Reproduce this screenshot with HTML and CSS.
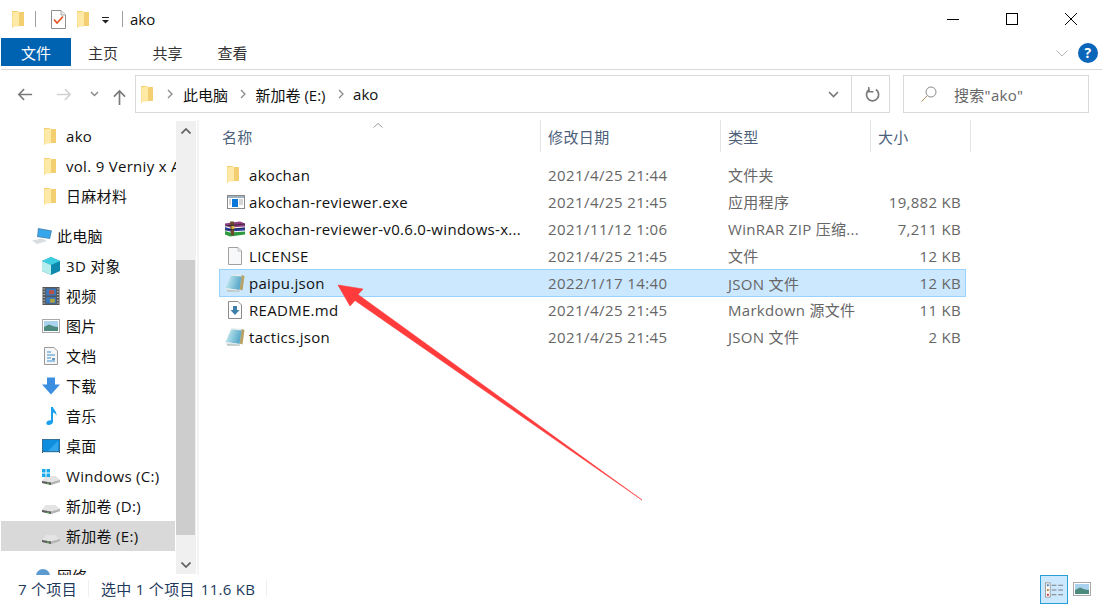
FILE: index.html
```html
<!DOCTYPE html>
<html lang="zh">
<head>
<meta charset="utf-8">
<title>ako</title>
<link rel="stylesheet" href="styles.css">
</head>
<body>
<svg class="defs" aria-hidden="true">
  <defs>
    <linearGradient id="jsonblue" x1="0" y1="0" x2="1" y2="0.3">
      <stop offset="0" stop-color="#dcf2f5"/>
      <stop offset="0.55" stop-color="#8fcbde"/>
      <stop offset="1" stop-color="#5aa8ca"/>
    </linearGradient>
    <symbol id="folder" viewBox="0 0 12 17">
      <path d="M0 0H5.500L6.500 1H12V15H2.500L0 17Z" fill="#f4cf72"/>
      <path d="M0 1.500L7 .5V15.500H2.600L0 17Z" fill="#ffe9a6"/>
      <path d="M0 1V17L1 16.400V1Z" fill="#fbdf92"/>
    </symbol>
    <symbol id="json" viewBox="0 0 20 18">
      <path d="M6 0L18 1L16 15L12 15Z" fill="#e6ecec"/>
      <path d="M16.500 1L19.500 2L17.500 16.500L14.500 15.500Z" fill="#b7a368"/>
      <path d="M6 1.500L16.500 2.500L14.500 16L.5 14Z" fill="url(#jsonblue)"/>
      <path d="M.5 14L14.500 16L15 17.500L2.500 17.500Z" fill="#e2e9e9"/>
      <path d="M2.500 17.500H15L14.800 16.700L1.600 16.200Z" fill="#a9b4b4"/>
    </symbol>
    <symbol id="drive" viewBox="0 0 18 10">
      <path d="M4 1H13L18 5V7L9 10L0 8V6Z" fill="#d4d4d4"/>
      <path d="M4 1H13L18 5L9 7.500L0 6Z" fill="#e4e4e4"/>
      <path d="M9 7.500L18 5V7L9 10Z" fill="#b4b4b4"/>
      <path d="M0 6L9 7.500V10L0 8Z" fill="#5c5c5c"/>
      <rect x="5" y="7.600" width="2" height="1.200" fill="#58c35a"/>
    </symbol>
  </defs>
</svg>

<div class="window">
  <header class="titlebar">
    <div class="qat">
      <svg class="ic-folder"><use href="#folder"/></svg>
      <span class="qat-sep first"></span>
      <svg class="ic-check" viewBox="0 0 15 19">
        <path d="M.5.5H10L14.500 5V18.500H.5Z" fill="#fff" stroke="#8f8f8f"/>
        <path d="M10 .5V5H14.500" fill="#eee" stroke="#aaa"/>
        <path d="M3 9.500L6 13L12 6.500" fill="none" stroke="#e2511f" stroke-width="1.600"/>
      </svg>
      <svg class="ic-folder"><use href="#folder"/></svg>
      <svg class="ic-drop" viewBox="0 0 8 7">
        <rect width="7" height="1" fill="#222"/>
        <path d="M0 3H7L3.500 6.500Z" fill="#222"/>
      </svg>
      <span class="qat-sep"></span>
      <span class="title-text">ako</span>
    </div>
    <div class="win-btns">
      <svg class="win-btn" viewBox="0 0 58 38"><path d="M23 19.500H35" stroke="#000" fill="none"/></svg>
      <svg class="win-btn" viewBox="0 0 58 38"><rect x="23.500" y="13.500" width="11" height="11" stroke="#000" fill="none"/></svg>
      <svg class="win-btn" viewBox="0 0 58 38"><path d="M23 13L35 25M35 13L23 25" stroke="#000" fill="none"/></svg>
    </div>
  </header>

  <nav class="ribbon">
    <span class="tab active">文件</span>
    <span class="tab">主页</span>
    <span class="tab">共享</span>
    <span class="tab">查看</span>
    <span class="spacer"></span>
    <svg class="ribbon-chev" viewBox="0 0 12 7"><path d="M.5.5L6 6L11.500.5" fill="none" stroke="#b5b5b5"/></svg>
    <span class="help">?</span>
  </nav>

  <div class="navrow">
    <div class="nav-btns">
      <svg class="nav-ic" viewBox="0 0 18 14"><path d="M17 7H2M8 1L2 7L8 13" fill="none" stroke="#7a7a7a" stroke-width="1.800"/></svg>
      <svg class="nav-ic light" viewBox="0 0 18 14"><path d="M1 7H16M10 1L16 7L10 13" fill="none" stroke="#d2d2d2" stroke-width="1.800"/></svg>
      <svg class="nav-small" viewBox="0 0 9 6"><path d="M1 1L4.500 4.500L8 1" fill="none" stroke="#8a8a8a" stroke-width="1.500"/></svg>
      <svg class="nav-up" viewBox="0 0 14 17"><path d="M7 17V2M1 8L7 2L13 8" fill="none" stroke="#7a7a7a" stroke-width="1.800"/></svg>
    </div>
    <div class="address">
      <svg class="ic-folder"><use href="#folder"/></svg>
      <svg class="crumb-chev first" viewBox="0 0 6 10"><path d="M1 1L5 5L1 9" fill="none" stroke="#8a8a8a" stroke-width="1.300"/></svg>
      <span class="crumb">此电脑</span>
      <svg class="crumb-chev" viewBox="0 0 6 10"><path d="M1 1L5 5L1 9" fill="none" stroke="#8a8a8a" stroke-width="1.300"/></svg>
      <span class="crumb">新加卷 (E:)</span>
      <svg class="crumb-chev" viewBox="0 0 6 10"><path d="M1 1L5 5L1 9" fill="none" stroke="#8a8a8a" stroke-width="1.300"/></svg>
      <span class="crumb">ako</span>
      <span class="spacer"></span>
      <svg class="addr-drop" viewBox="0 0 11 7"><path d="M1 1L5.500 5.500L10 1" fill="none" stroke="#777" stroke-width="1.600"/></svg>
      <span class="refresh">
        <svg class="refresh-ic" viewBox="0 0 16 16"><path d="M5 2.500A6.500 6.500 0 1 0 11.500 2.700" fill="none" stroke="#7a7a7a" stroke-width="1.800"/><path d="M4 0V5H9" fill="none" stroke="#7a7a7a" stroke-width="1.500"/></svg>
      </span>
    </div>
    <div class="search">
      <svg class="search-ic" viewBox="0 0 16 16"><circle cx="10" cy="6" r="5" fill="none" stroke="#8a8a8a"/><path d="M6.500 9.500L.5 15.500" stroke="#b08a5a" fill="none"/></svg>
      <span>搜索"ako"</span>
    </div>
  </div>

  <main class="body">
    <aside class="sidebar">
      <div class="tree">
        <div class="tree-row"><svg class="tree-ic ic-folder"><use href="#folder"/></svg><span class="tree-label">ako</span></div>
        <div class="tree-row"><svg class="tree-ic ic-folder"><use href="#folder"/></svg><span class="tree-label">vol. 9 Verniy x Akatsuki</span></div>
        <div class="tree-row"><svg class="tree-ic ic-folder"><use href="#folder"/></svg><span class="tree-label">日麻材料</span></div>
        <div class="tree-row top-level section">
          <svg class="pc-ic" viewBox="0 0 20 16">
            <path d="M6 0L20 2.500L18 11L5 9Z" fill="#4c90c4"/>
            <path d="M7 1.500L18.500 3.500L17 9.800L6.300 8Z" fill="#35a7ea"/>
            <path d="M0 12.500L10 10.500L15 13L5 16Z" fill="#d9dde0"/>
          </svg>
          <span class="tree-label">此电脑</span>
        </div>
        <div class="tree-row">
          <svg class="tree-ic18" viewBox="0 0 18 18">
            <path d="M9 0L18 4V14L9 18L0 14V4Z" fill="#0e88ad"/>
            <path d="M9 0L18 4L9 8L0 4Z" fill="#3dcde0"/>
            <path d="M0 4L9 8V18L0 14Z" fill="#b5ecec"/>
          </svg>
          <span class="tree-label">3D 对象</span>
        </div>
        <div class="tree-row">
          <svg class="tree-ic18" viewBox="0 0 18 19">
            <rect width="18" height="19" fill="#555"/>
            <rect x="3.500" y="1.500" width="11" height="7.500" fill="#3c76b8"/>
            <rect x="3.500" y="10.500" width="11" height="7" fill="#3c76b8"/>
            <rect x="7" y="3.500" width="5" height="4" fill="#c0503c"/>
            <rect x="8" y="12.500" width="5" height="4" fill="#b0a23c"/>
            <path d="M1 2H2.500M1 5H2.500M1 8H2.500M1 11H2.500M1 14H2.500M1 17H2.500M15.500 2H17M15.500 5H17M15.500 8H17M15.500 11H17M15.500 14H17M15.500 17H17" stroke="#ddd"/>
          </svg>
          <span class="tree-label">视频</span>
        </div>
        <div class="tree-row">
          <svg class="tree-ic18" viewBox="0 0 18 14">
            <rect x=".5" y=".5" width="17" height="13" fill="#fff" stroke="#a8a8a8"/>
            <rect x="2" y="2" width="14" height="10" fill="#a9d2ee"/>
            <path d="M2 8L7 5.500L12 7.500L16 8V12H2Z" fill="#4b8a7c"/>
          </svg>
          <span class="tree-label">图片</span>
        </div>
        <div class="tree-row">
          <svg class="tree-ic14" viewBox="0 0 14 18">
            <path d="M.5.5H10L13.500 4V17.500H.5Z" fill="#f6f6f6" stroke="#9a9a9a"/>
            <path d="M3 5H7M3 8H11M3 11H7M3 14H11" stroke="#3a8fd0"/>
            <path d="M8 11H11V13H8Z" fill="#6a9bbf"/>
          </svg>
          <span class="tree-label">文档</span>
        </div>
        <div class="tree-row">
          <svg class="tree-ic18" viewBox="0 0 18 17">
            <path d="M5 0H13V7H18L9 17L0 7H5Z" fill="#3c8ee0"/>
          </svg>
          <span class="tree-label">下载</span>
        </div>
        <div class="tree-row">
          <svg class="tree-ic14" viewBox="0 0 14 18">
            <path d="M7 0H9C9.500 3 13 4 12.500 9C12 6.500 10.500 6 9 5.500V14.500C9 17 6.500 18 4.500 18C2.500 18 2 16.500 2.500 15.500C3 14 5.500 13 7 13.500Z" fill="#18a0ee"/>
          </svg>
          <span class="tree-label">音乐</span>
        </div>
        <div class="tree-row">
          <svg class="tree-ic18" viewBox="0 0 18 14">
            <rect width="18" height="14" fill="#555"/>
            <rect x=".5" y=".5" width="17" height="12" fill="#0f8ee0"/>
            <path d="M6 12L16 2V12Z" fill="#31a6ec"/>
            <path d="M1 13.500H17" stroke="#cfe6f5"/>
          </svg>
          <span class="tree-label">桌面</span>
        </div>
        <div class="tree-row">
          <svg class="tree-ic18 tall" viewBox="0 0 18 16">
            <use href="#drive" x="0" y="6" width="18" height="10"/>
            <path d="M0 0H3.500V3.500H0ZM4.500 0H8V3.500H4.500ZM0 4.500H3.500V8H0ZM4.500 4.500H8V8H4.500Z" fill="#1aa9ee"/>
          </svg>
          <span class="tree-label">Windows (C:)</span>
        </div>
        <div class="tree-row">
          <svg class="tree-ic18 drive"><use href="#drive"/></svg>
          <span class="tree-label">新加卷 (D:)</span>
        </div>
        <div class="tree-row selected">
          <svg class="tree-ic18 drive"><use href="#drive"/></svg>
          <span class="tree-label">新加卷 (E:)</span>
        </div>
        <div class="tree-row top-level net">
          <svg class="pc-ic" viewBox="0 0 20 16">
            <circle cx="11" cy="8" r="7" fill="#5c9bd0"/>
            <path d="M0 13L8 11L13 14L6 16Z" fill="#c9ced2"/>
          </svg>
          <span class="tree-label">网络</span>
        </div>
      </div>
      <div class="scrollbar">
        <svg class="sb-arrow" viewBox="0 0 10 6"><path d="M.5 5.500L5 1L9.500 5.500" fill="none" stroke="#606060" stroke-width="1.700"/></svg>
        <div class="sb-thumb"></div>
        <svg class="sb-arrow bottom" viewBox="0 0 10 6"><path d="M.5.5L5 5L9.500.5" fill="none" stroke="#606060" stroke-width="1.700"/></svg>
      </div>
    </aside>

    <section class="files">
      <div class="col-head">
        <div class="cell name">名称<svg class="sort" viewBox="0 0 10 5"><path d="M.5 4.500L5 .5L9.500 4.500" fill="none" stroke="#9a9a9a"/></svg></div>
        <div class="cell date">修改日期</div>
        <div class="cell type">类型</div>
        <div class="cell size">大小</div>
      </div>
      <div class="list">
        <div class="row">
          <div class="cell name"><span class="file-ic"><svg class="ic-folder"><use href="#folder"/></svg></span><span>akochan</span></div>
          <div class="cell date">2021/4/25 21:44</div>
          <div class="cell type">文件夹</div>
          <div class="cell size"></div>
        </div>
        <div class="row">
          <div class="cell name"><span class="file-ic"><svg class="ic-18" viewBox="0 0 18 14">
            <rect x=".5" y=".5" width="17" height="13" fill="#fff" stroke="#8a8a8a"/>
            <rect x="1" y="1" width="16" height="2" fill="#9fb0c0"/>
            <rect x="5" y="4" width="6" height="8" fill="#0a78d8"/>
            <path d="M12 5H16M12 7H16M12 9H16M2 5H4M2 7H4M2 9H4" stroke="#aaa"/>
          </svg></span><span>akochan-reviewer.exe</span></div>
          <div class="cell date">2021/4/25 21:45</div>
          <div class="cell type">应用程序</div>
          <div class="cell size">19,882 KB</div>
        </div>
        <div class="row">
          <div class="cell name"><span class="file-ic"><svg class="ic-20" viewBox="0 0 20 15">
            <path d="M0 2L15 0L20 2V5L5 6L0 4Z" fill="#8e3a7e"/>
            <path d="M0 5.500L5 7L20 6V9L5 10L0 8.500Z" fill="#2c45a8"/>
            <path d="M0 9.500L5 11L20 10V13L5 15L0 13Z" fill="#2d9a3e"/>
            <path d="M5 0H9V14H6Z" fill="#6a4a28"/>
            <path d="M0 4.500L20 2.500M0 8.500L20 6.500" stroke="#222" stroke-width=".7"/>
            <rect x="6.500" y="4.500" width="3" height="3" fill="#d8b04a"/>
          </svg></span><span>akochan-reviewer-v0.6.0-windows-x...</span></div>
          <div class="cell date">2021/11/12 1:06</div>
          <div class="cell type">WinRAR ZIP 压缩...</div>
          <div class="cell size">7,211 KB</div>
        </div>
        <div class="row">
          <div class="cell name"><span class="file-ic"><svg class="ic-14" viewBox="0 0 14 18">
            <path d="M.5.5H10L13.500 4V17.500H.5Z" fill="#f7f8f9" stroke="#a0a0a0"/>
            <path d="M10 .5V4H13.500" fill="#eee" stroke="#c0c0c0"/>
          </svg></span><span>LICENSE</span></div>
          <div class="cell date">2021/4/25 21:45</div>
          <div class="cell type">文件</div>
          <div class="cell size">12 KB</div>
        </div>
        <div class="row selected">
          <div class="cell name"><span class="file-ic"><svg class="ic-20"><use href="#json"/></svg></span><span>paipu.json</span></div>
          <div class="cell date">2022/1/17 14:40</div>
          <div class="cell type">JSON 文件</div>
          <div class="cell size">12 KB</div>
        </div>
        <div class="row">
          <div class="cell name"><span class="file-ic"><svg class="ic-14" viewBox="0 0 14 18">
            <path d="M.5.5H10L13.500 4V17.500H.5Z" fill="#fff" stroke="#8a8a8a"/>
            <path d="M5 5H9V9H11.500L7 14L2.500 9H5Z" fill="#3d7fa8"/>
          </svg></span><span>README.md</span></div>
          <div class="cell date">2021/4/25 21:45</div>
          <div class="cell type">Markdown 源文件</div>
          <div class="cell size">11 KB</div>
        </div>
        <div class="row">
          <div class="cell name"><span class="file-ic"><svg class="ic-20"><use href="#json"/></svg></span><span>tactics.json</span></div>
          <div class="cell date">2021/4/25 21:45</div>
          <div class="cell type">JSON 文件</div>
          <div class="cell size">2 KB</div>
        </div>
      </div>
    </section>
  </main>

  <footer class="status">
    <span class="st-text">7 个项目</span>
    <span class="st-sep"></span>
    <span class="st-text">选中 1 个项目</span>
    <span class="st-text st-bytes">11.6 KB</span>
    <span class="st-sep"></span>
    <span class="spacer"></span>
    <span class="view-btn">
      <svg class="view-ic" viewBox="0 0 19 16">
        <rect x=".5" y=".5" width="5" height="15" fill="#fff" stroke="#9a9a9a"/>
        <rect x="2" y="2" width="2" height="2" fill="#3c78b0"/>
        <rect x="2" y="7" width="2" height="2" fill="#b88030"/>
        <rect x="2" y="12" width="2" height="2" fill="#cc3030"/>
        <path d="M7 3H12M14 3H19M7 8H12M14 8H19M7 13H12M14 13H19" stroke="#777"/>
      </svg>
    </span>
    <svg class="view-large" viewBox="0 0 18 14">
      <rect x=".5" y=".5" width="17" height="13" fill="#fff" stroke="#a8a8a8"/>
      <rect x="2" y="2" width="14" height="10" fill="#a9d2ee"/>
      <path d="M2 8L7 5.500L12 7.500L16 8V12H2Z" fill="#4b8a7c"/>
    </svg>
  </footer>

  <svg class="arrow" viewBox="0 0 1102 605" aria-hidden="true">
    <path d="M338 285L363 289L358 294.500L642 500L355 300.500L350 306Z" fill="#ff3b3b" stroke="#ff3b3b" stroke-width=".6"/>
  </svg>
</div>
</body>
</html>
```

FILE: styles.css
```css
* { box-sizing: border-box; }

html, body {
  margin: 0;
  padding: 0;
  width: 1102px;
  height: 605px;
  overflow: hidden;
  background: #fff;
}

body {
  font-family: "Open Sans", "Noto Sans CJK SC", sans-serif;
  font-size: 15px;
  letter-spacing: .3px;
  color: #111;
}

svg { display: block; flex: none; }

.defs { width: 0; height: 0; position: absolute; }

.spacer { flex: 1; }

.window {
  position: relative;
  width: 1102px;
  height: 605px;
  display: flex;
  flex-direction: column;
  overflow: hidden;
}

/* title bar */
.titlebar {
  height: 38px;
  display: flex;
  justify-content: space-between;
  flex: none;
}

.qat {
  display: flex;
  align-items: center;
  padding-left: 12px;
}

.ic-folder { width: 12px; height: 17px; }
.ic-check { width: 15px; height: 19px; margin-right: 11px; }
.ic-drop { width: 8px; height: 7px; margin-left: 13px; margin-top: 3px; }

.qat-sep {
  width: 1px;
  height: 16px;
  background: #a0a0a0;
  margin: 0 7px 0 12px;
}
.qat-sep.first { margin: 0 15px 0 11px; }

.title-text { letter-spacing: 0; margin-top: -1px; }

.win-btns { display: flex; margin-right: 2px; }
.win-btn { width: 58px; height: 38px; }
.win-btn + .win-btn { margin-left: 1px; }

/* ribbon */
.ribbon {
  height: 32px;
  margin-left: 1px;
  padding-right: 4px;
  border-bottom: 1px solid #d9d9d9;
  display: flex;
  align-items: flex-start;
  flex: none;
}

.tab {
  height: 28px;
  width: 65px;
  display: flex;
  align-items: center;
  justify-content: center;
  letter-spacing: 0;
  color: #333;
}

.tab.active {
  width: 70px;
  background: #0063b1;
  color: #fff;
}

.tab:nth-child(2) { width: 64px; }

.ribbon-chev { width: 12px; height: 7px; margin-top: 12px; margin-right: 10px; }

.help {
  width: 20px;
  height: 20px;
  margin-top: 5px;
  border-radius: 50%;
  background: #0a66b8;
  color: #fff;
  font-weight: 700;
  font-size: 14px;
  line-height: 20px;
  text-align: center;
}

/* navigation row */
.navrow {
  height: 38px;
  margin-top: 5px;
  display: flex;
  align-items: stretch;
  flex: none;
}

.nav-btns {
  width: 135px;
  display: flex;
  align-items: center;
  padding-left: 17px;
}

.nav-ic { width: 16px; height: 13px; margin-right: 23px; }
.nav-ic.light { margin-right: 18px; }
.nav-small { width: 9px; height: 6px; margin-right: 14px; }
.nav-up { width: 13px; height: 16px; margin-top: 5px; }

.address {
  width: 755px;
  border: 1px solid #d9d9d9;
  display: flex;
  align-items: center;
  padding-left: 5px;
  letter-spacing: 0;
}

.crumb-chev { width: 6px; height: 10px; margin: 0 9.500px 0 12px; }
.crumb-chev.first { margin: 0 10px 0 14px; }

.addr-drop { width: 11px; height: 7px; margin-right: 12px; }

.refresh {
  width: 38px;
  height: 100%;
  border-left: 1px solid #d9d9d9;
  padding-left: 4px;
  display: flex;
  align-items: center;
  justify-content: center;
}
.refresh-ic { width: 15px; height: 15px; }

.search {
  width: 186px;
  margin-left: 13px;
  border: 1px solid #d9d9d9;
  display: flex;
  align-items: center;
  padding-left: 17px;
  color: #666;
}
.search-ic { width: 16px; height: 16px; margin-right: 17px; }

/* body */
.body {
  height: 455px;
  margin-top: 7px;
  display: flex;
  flex: none;
  min-height: 0;
}

.sidebar {
  width: 199px;
  display: flex;
  border-right: 2px solid #f3f3f3;
  overflow: hidden;
  flex: none;
}

.tree {
  width: 176px;
  padding: 1px 0 0 1px;
  overflow: hidden;
  flex: none;
}

.tree-row {
  height: 30px;
  display: flex;
  align-items: center;
  padding-left: 41px;
  white-space: nowrap;
}

.tree-ic { margin-left: 2px; margin-right: 10px; }
.tree-ic18 { width: 18px; height: 18px; margin-right: 6px; }
.tree-ic14 { width: 14px; height: 18px; margin: 0 8px 0 2px; }
.tree-ic18.drive { height: 10px; margin-top: 6px; }
.tree-ic18.tall { height: 16px; margin-top: 1px; }
.tree-label { overflow: hidden; width: 120px; flex: none; margin-top: -1px; }

.tree-row.section { margin-top: 10px; padding-left: 31px; }
.top-level .tree-label { width: auto; }
.pc-ic { width: 20px; height: 16px; margin-right: 5px; }
.tree-row.net { padding-left: 31px; margin-top: 10px; }

.tree-row.selected { background: #d9d9d9; width: 174px; }

.scrollbar {
  width: 20px;
  height: 453px;
  margin-top: 1px;
  background: #f0f0f0;
  display: flex;
  flex-direction: column;
  align-items: center;
  flex: none;
}

.sb-arrow { width: 10px; height: 6px; margin-top: 7px; }
.sb-arrow.bottom { margin-top: 27px; }

.sb-thumb {
  width: 19px;
  height: 275px;
  background: #cdcdcd;
  margin-top: 126px;
  align-self: flex-start;
}

/* file list */
.files { flex: 1; min-width: 0; padding-left: 20px; }

.col-head, .row { display: flex; width: 752px; }

.col-head { height: 32px; }

.col-head .cell {
  color: #4c607a;
  border-right: 1px solid #e5e5e5;
  height: 32px;
  position: relative;
}

.cell {
  display: flex;
  align-items: center;
  white-space: nowrap;
  flex: none;
  padding-left: 7px;
}

.cell.name { width: 322px; padding-left: 3px; }
.cell.date { width: 180px; color: #666; letter-spacing: .43px; }
.cell.type { width: 150px; color: #666; }
.cell.size { width: 100px; color: #666; }

.col-head .cell.date, .col-head .cell.type, .col-head .cell.size { color: #4c607a; }

.sort { position: absolute; left: 154px; top: 3px; width: 10px; height: 5px; }

.list { padding-top: 9px; }

.row { height: 27px; width: 747px; border: 1px solid transparent; }

.row .cell.name { width: 321px; padding-left: 6px; }
.row .cell.size {
  width: 96px;
  justify-content: flex-end;
  padding-right: 6px;
}
.row.selected { background: #cce8ff; border-color: #99d1ff; height: 28px; margin-bottom: -1px; }

.file-ic {
  width: 23px;
  display: flex;
  justify-content: flex-start;
  padding-left: 1px;
  flex: none;
}

.ic-18 { width: 18px; height: 14px; }
.ic-20 { width: 20px; height: 18px; margin-left: -2px; }
.ic-14 { width: 14px; height: 18px; margin-left: 1px; }

/* status bar */
.status {
  height: 30px;
  display: flex;
  align-items: flex-start;
  padding: 4px 11px 0 18px;
  color: #1e395b;
  flex: none;
}

.st-text { line-height: 20px; }

.st-sep {
  width: 1px;
  height: 17px;
  margin: 1px 12px 1px 11px;
  background: #efefef;
}

.st-bytes { margin-left: 6px; }

.view-btn {
  width: 28px;
  height: 29px;
  margin-top: -4px;
  background: #cce8ff;
  border: 1px solid #2a9fd6;
  display: flex;
  align-items: center;
  justify-content: center;
}
.view-ic { width: 18px; height: 16px; }
.view-large { width: 18px; height: 14px; margin: 3px 0 0 5px; }

/* annotation */
.arrow {
  position: absolute;
  left: 0;
  top: 0;
  width: 1102px;
  height: 605px;
  pointer-events: none;
}
```
